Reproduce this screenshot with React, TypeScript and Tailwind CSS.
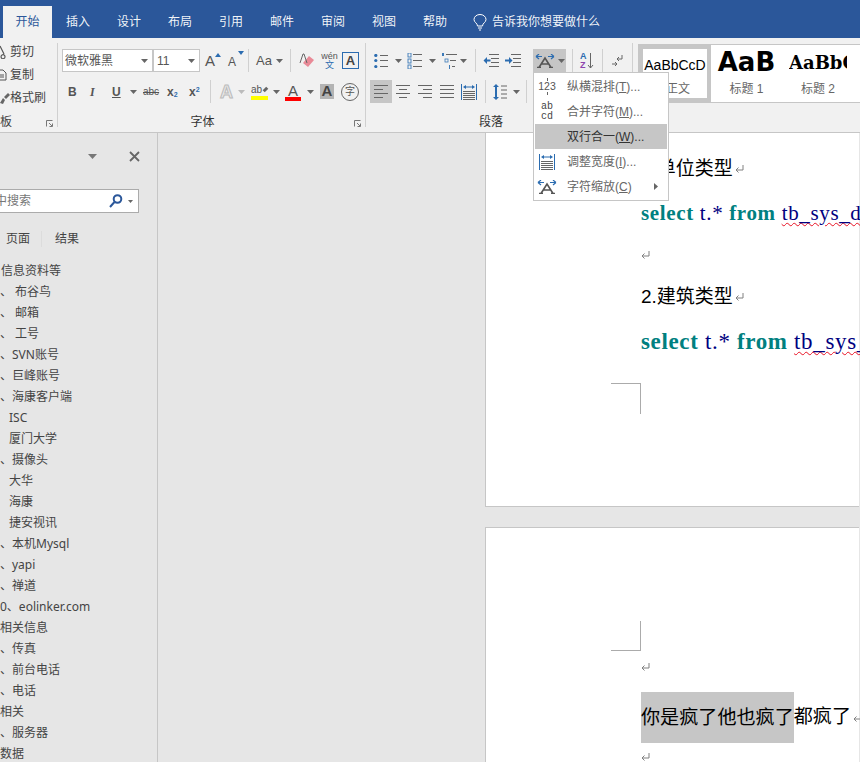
import React from "react";

const Caret = ({ className = "" }: { className?: string }) => (
	<svg width="7" height="4" viewBox="0 0 7 4" className={`shrink-0 ${className}`}>
		<path d="M0 0h7L3.5 4z" fill="#666" />
	</svg>
);

const Sep = ({ className = "" }: { className?: string }) => (
	<div className={`w-px h-[23px] bg-[#d0d0d0] shrink-0 ${className}`} />
);

const Launcher = () => (
	<svg width="7" height="7" viewBox="0 0 7 7" className="absolute right-[4px] bottom-0">
		<path d="M0.5 6.5V0.5H6.5M3 3l3 3M6.5 3.5v3h-3" fill="none" stroke="#777" strokeWidth="1" />
	</svg>
);

const ReturnMark = () => (
	<svg width="10" height="10" viewBox="0 0 10 10" className="shrink-0">
		<path d="M8 1v5H1.5M3.500 3.500L1 6l2.500 2.500" fill="none" stroke="#808080" strokeWidth="1" />
	</svg>
);

const Lines = ({ kind }: { kind: "left" | "center" | "right" | "full" }) => {
	const rows = {
		left: [[0, 14], [0, 9], [0, 14], [0, 9]],
		center: [[0, 14], [3, 8], [0, 14], [3, 8]],
		right: [[0, 14], [5, 9], [0, 14], [5, 9]],
		full: [[0, 14], [0, 14], [0, 14], [0, 14]],
	}[kind];
	return (
		<svg width="14" height="13" viewBox="0 0 14 13" className="shrink-0">
			{rows.map(([x, w], i) => (
				<rect key={i} x={x} y={i * 4} width={w} height="1" fill="#666" />
			))}
		</svg>
	);
};

const BulletIcon = () => (
	<svg width="14" height="14" viewBox="0 0 14 14" className="shrink-0">
		{[1, 6, 12].map((y) => (
			<g key={y}>
				<circle cx="1.8" cy={y + 0.5} r="1.6" fill="#2b6cb0" />
				<rect x="6" y={y} width="8" height="1" fill="#666" />
			</g>
		))}
	</svg>
);

const NumberIcon = () => (
	<svg width="15" height="16" viewBox="0 0 15 16" className="shrink-0">
		{[1, 7, 13].map((y) => (
			<g key={y}>
				<rect x="1" y={y - 1} width="3" height="4" fill="none" stroke="#3d7ab8" strokeWidth="0.9" />
				<rect x="6" y={y} width="9" height="1" fill="#666" />
			</g>
		))}
	</svg>
);

const MultiIcon = () => (
	<svg width="16" height="16" viewBox="0 0 16 16" className="shrink-0">
		<rect x="1" y="0" width="2" height="3" fill="#3d7ab8" />
		<rect x="5" y="1" width="11" height="1" fill="#666" />
		<rect x="4" y="6" width="3" height="3" fill="none" stroke="#3d7ab8" strokeWidth="0.8" />
		<rect x="9" y="7" width="6" height="1" fill="#666" />
		<rect x="8" y="12" width="1" height="4" fill="#3d7ab8" />
		<rect x="11" y="13" width="3" height="1" fill="#666" />
	</svg>
);

const IndentIcon = ({ flip = false }: { flip?: boolean }) => (
	<svg width="16" height="13" viewBox="0 0 16 13" className="shrink-0">
		<rect x="6" y="0" width="10" height="1" fill="#666" />
		<rect x="8" y="4" width="8" height="1" fill="#666" />
		<rect x="8" y="8" width="8" height="1" fill="#666" />
		<rect x="6" y="12" width="10" height="1" fill="#666" />
		{flip ? (
			<path d="M0 5.500h4V3l3.500 3.500L4 10V7.500H0z" fill="#2b6cb0" />
		) : (
			<path d="M7.500 5.500H4V3L0.500 6.500 4 10V7.500h3.500z" fill="#2b6cb0" />
		)}
	</svg>
);

const ScaleIcon = () => (
	<svg width="20" height="14" viewBox="0 0 20 14" className="shrink-0">
		<path d="M2 13.500h4M14 13.500h4M4 13.500L10 4l6 9.500M6.500 10h7" fill="none" stroke="#555" strokeWidth="1.600" />
		<path d="M1 3.500h6M1 3.500L4 1M1 3.500L4 6M19 3.500h-6M19 3.500L16 1M19 3.500L16 6" fill="none" stroke="#2b6cb0" strokeWidth="1.200" transform="translate(0 -1)" />
	</svg>
);

const WidthIcon = () => (
	<svg width="16" height="16" viewBox="0 0 16 16" className="shrink-0">
		<rect x="0" y="0" width="1" height="16" fill="#2b6cb0" />
		<rect x="15" y="0" width="1" height="16" fill="#2b6cb0" />
		<path d="M2 3l3-2v1.500h6V1l3 2-3 2V3.500H5V5z" fill="#2b6cb0" />
		{[7, 9, 11, 13, 15].map((y) => (
			<rect key={y} x="2" y={y} width="12" height="1" fill="#666" />
		))}
	</svg>
);

const MenuLabel = ({ text, hot, tail = "..." }: { text: string; hot: string; tail?: string }) => (
	<span>
		{text}(<span className="underline">{hot}</span>){tail}
	</span>
);

const menuRows = [
	{
		icon: (
			<span className="relative flex flex-col items-center text-[10.5px] leading-[11px] text-[#555]">
				<span className="w-px h-[3px] bg-[#666]" />
				<span>123</span>
				<span className="w-px h-[3px] bg-[#666]" />
			</span>
		),
		label: <MenuLabel text="纵横混排" hot="T" />,
	},
	{
		icon: (
			<span className="flex flex-col items-center text-[10px] leading-[10px] text-[#444] [font-family:'Liberation_Mono',monospace]">
				<span>ab</span>
				<span>cd</span>
			</span>
		),
		label: <MenuLabel text="合并字符" hot="M" />,
	},
	{ icon: null, label: <MenuLabel text="双行合一" hot="W" />, active: true },
	{ icon: <WidthIcon />, label: <MenuLabel text="调整宽度" hot="I" /> },
	{ icon: <ScaleIcon />, label: <MenuLabel text="字符缩放" hot="C" tail="" />, more: true },
];

const treeRows = [
	{ text: "信息资料等", pl: "pl-[1px]" },
	{ text: "、 布谷鸟", pl: "pl-0" },
	{ text: "、 邮箱", pl: "pl-0" },
	{ text: "、 工号", pl: "pl-0" },
	{ text: "、SVN账号", pl: "pl-0" },
	{ text: "、巨峰账号", pl: "pl-0" },
	{ text: "、海康客户端", pl: "pl-0" },
	{ text: "ISC", pl: "pl-[9px]" },
	{ text: "厦门大学", pl: "pl-[9px]" },
	{ text: "、摄像头", pl: "pl-0" },
	{ text: "大华", pl: "pl-[9px]" },
	{ text: "海康", pl: "pl-[9px]" },
	{ text: "捷安视讯", pl: "pl-[9px]" },
	{ text: "、本机Mysql", pl: "pl-0" },
	{ text: "、yapi", pl: "pl-0" },
	{ text: "、禅道", pl: "pl-0" },
	{ text: "0、eolinker.com", pl: "pl-0" },
	{ text: "相关信息", pl: "pl-0" },
	{ text: "、传真", pl: "pl-0" },
	{ text: "、前台电话", pl: "pl-0" },
	{ text: "、电话", pl: "pl-0" },
	{ text: "相关", pl: "pl-0" },
	{ text: "、服务器", pl: "pl-0" },
	{ text: "数据", pl: "pl-0" },
];

const tabs = ["插入", "设计", "布局", "引用", "邮件", "审阅", "视图", "帮助"];

function SqlLine({ size, tail }: { size: string; tail: string }) {
	return (
		<div className={`flex h-[36px] items-center whitespace-pre tracking-[0.65px] [font-family:'Liberation_Serif',serif] ${size}`}>
			<span className="font-bold text-[#008080]">select </span>
			<span className="text-[#000080]">t.* </span>
			<span className="font-bold text-[#008080]">from </span>
			<span className="text-[#000080] underline decoration-wavy decoration-[#e81123] decoration-1 underline-offset-2">{tail}</span>
		</div>
	);
}

export default function App() {
	return (
		<div className="relative w-[860px] h-[762px] overflow-hidden bg-[#e6e6e6] text-[12px] text-[#444] [font-family:'Liberation_Sans','Noto_Sans_CJK_SC',sans-serif]">
			{/* Title tabs */}
			<div className="flex h-[38px] bg-[#2b579a] pt-[6px] pl-[3px]">
				<div className="w-[49px] flex items-center justify-center bg-[#f1f1f1] text-[#2b579a]">开始</div>
				<div className="flex items-center text-white/95 ml-[14px]">
					{tabs.map((t) => (
						<span key={t} className="w-[24px] mr-[27px]">{t}</span>
					))}
					<svg width="14" height="17" viewBox="0 0 14 17" fill="none" stroke="#fff" strokeWidth="1" className="-ml-[1px]">
						<path d="M4.500 12c0-3-3.500-3.500-3.500-6.500a6 5 0 0 1 12 0c0 3-3.500 3.500-3.500 6.500zM5 14h4M6 16h2" />
					</svg>
					<span className="ml-[5px] text-white/95">告诉我你想要做什么</span>
				</div>
			</div>

			{/* Ribbon */}
			<div className="flex h-[95px] bg-[#f1f1f1] border-b border-[#c6c6c6] overflow-hidden">
				{/* Clipboard */}
				<div className="relative w-[58px] h-[84px] mt-[5px] border-r border-[#d0d0d0] shrink-0">
					<div className="flex flex-col gap-[5px]">
						<div className="flex items-center h-[18px]">
							<svg width="7" height="14" viewBox="0 0 7 14" fill="none" stroke="#555" strokeWidth="1.200"><path d="M0 1l4 8M5 12a2 2 0 1 1-3-2 2 2 0 0 1 3 2z" /></svg>
							<span className="ml-[3px]">剪切</span>
						</div>
						<div className="flex items-center h-[18px]">
							<svg width="7" height="12" viewBox="0 0 7 12" fill="none" stroke="#555"><path d="M-2 1h5l3 3v7h-8zM0 6h4M0 8h4" /></svg>
							<span className="ml-[3px]">复制</span>
						</div>
						<div className="flex items-center h-[18px]">
							<svg width="10" height="13" viewBox="0 0 10 13"><path d="M8 1l2 2-4 4-2-2zM3 6l2 2-2 4-3-1z" fill="#666" /></svg>
							<span>格式刷</span>
						</div>
					</div>
					<div className="absolute -bottom-[2px] left-0 h-[14px] leading-[14px]">板</div>
					<Launcher />
				</div>

				{/* Font */}
				<div className="relative w-[308px] h-[84px] mt-[5px] border-r border-[#d0d0d0] shrink-0">
					<div className="flex items-center h-[23px] mt-[6px] pl-[4px]">
						<div className="w-[91px] h-[23px] flex items-center justify-between bg-white border border-[#c6c6c6] pl-[2px] pr-[4px] text-[#555]">
							<span>微软雅黑</span>
							<Caret />
						</div>
						<div className="w-[47px] h-[23px] flex items-center justify-between bg-white border border-[#c6c6c6] pl-[3px] pr-[4px] text-[#555]">
							<span>11</span>
							<Caret />
						</div>
						<div className="relative ml-[5px] w-[16px] text-[15px] leading-none text-[#555]">
							A
							<svg width="6" height="4" viewBox="0 0 6 4" className="absolute right-0 top-0"><path d="M0 4h6L3 0z" fill="#2b6cb0" /></svg>
						</div>
						<div className="relative ml-[7px] w-[16px] text-[12px] leading-none text-[#555] pt-[2px]">
							A
							<svg width="6" height="4" viewBox="0 0 6 4" className="absolute right-0 top-[-3px]"><path d="M0 0h6L3 4z" fill="#2b6cb0" /></svg>
						</div>
						<Sep className="ml-[4px]" />
						<span className="ml-[7px] w-[17px] text-[13px] text-[#555]">Aa</span>
						<Caret className="ml-[3px]" />
						<Sep className="ml-[7px]" />
						<svg width="17" height="16" viewBox="0 0 17 16" className="ml-[8px] shrink-0">
							<path d="M10 3l5 4-6 7-5-4z" fill="#e98a97" />
							<path d="M1 10L4 1h1l3 9" fill="none" stroke="#666" />
						</svg>
						<div className="ml-[5px] w-[17px] flex flex-col items-center leading-none">
							<span className="text-[9px] text-[#555]">wén</span>
							<span className="text-[9px] text-[#2b6cb0]">文</span>
						</div>
						<div className="ml-[4px] w-[17px] h-[17px] flex items-center justify-center border border-[#2b6cb0] text-[13px] font-bold text-[#444]">A</div>
					</div>
					<div className="flex items-center h-[23px] mt-[8px]">
						<span className="ml-[10px] w-[9px] font-bold text-[#555]">B</span>
						<span className="ml-[13px] w-[9px] italic font-bold text-[#555] [font-family:'Liberation_Serif',serif]">I</span>
						<span className="ml-[13px] w-[10px] font-bold underline text-[#555]">U</span>
						<Caret className="ml-[8px]" />
						<span className="ml-[6px] w-[17px] text-[10px] line-through text-[#555]">abc</span>
						<span className="ml-[7px] w-[12px] font-bold text-[#555]">x<sub className="text-[7px] text-[#2b6cb0]">2</sub></span>
						<span className="ml-[10px] w-[13px] font-bold text-[#555]">x<sup className="text-[7px] text-[#2b6cb0]">2</sup></span>
						<Sep className="ml-[8px]" />
						<span className="ml-[9px] w-[16px] text-[18px] font-bold leading-none text-[#e8e8e8] [-webkit-text-stroke:1px_#bbb]">A</span>
						<svg width="7" height="4" viewBox="0 0 7 4" className="ml-[2px] shrink-0"><path d="M0 0h7L3.500 4z" fill="#bbb" /></svg>
						<div className="ml-[6px] w-[17px] flex flex-col leading-none">
							<div className="flex items-center h-[13px] text-[10px] text-[#555]">ab<span className="ml-[1px] w-[8px] h-[3px] -rotate-45 bg-[#666]" /></div>
							<div className="h-[4px] bg-[#ffff00]" />
						</div>
						<Caret className="ml-[5px]" />
						<div className="ml-[5px] w-[16px] flex flex-col items-center leading-none">
							<span className="text-[15px] h-[14px] text-[#555]">A</span>
							<div className="w-[16px] h-[4px] bg-[#ff0000]" />
						</div>
						<Caret className="ml-[6px]" />
						<div className="ml-[6px] w-[14px] h-[15px] flex items-center justify-center bg-[#b4b4b4] font-bold text-[15px] text-[#444]">A</div>
						<div className="ml-[7px] w-[18px] h-[18px] flex items-center justify-center rounded-full border border-[#666] text-[10px] text-[#555]">字</div>
					</div>
					<div className="absolute -bottom-[2px] inset-x-0 h-[14px] pr-[18px] leading-[14px] text-center text-[#333]">字体</div>
					<Launcher />
				</div>

				{/* Paragraph */}
				<div className="relative w-[267px] h-[84px] mt-[5px] border-r border-[#d0d0d0] shrink-0">
					<div className="flex items-center h-[23px] mt-[6px]">
						<div className="ml-[8px]"><BulletIcon /></div>
						<Caret className="ml-[7px]" />
						<div className="ml-[5px]"><NumberIcon /></div>
						<Caret className="ml-[7px]" />
						<div className="ml-[5px]"><MultiIcon /></div>
						<Caret className="ml-[3px]" />
						<Sep className="ml-[8px]" />
						<div className="ml-[7px]"><IndentIcon /></div>
						<div className="ml-[6px]"><IndentIcon flip /></div>
						<div className="ml-[12px] w-[33px] h-[23px] flex items-center gap-[3px] pl-[2px] bg-[#c6c6c6]">
							<ScaleIcon />
							<Caret />
						</div>
						<Sep className="ml-[6px]" />
						<div className="ml-[7px] w-[15px] flex items-center">
							<div className="flex flex-col text-[9px] leading-[9px] font-bold">
								<span className="text-[#2b6cb0]">A</span>
								<span className="text-[#8e44ad]">Z</span>
							</div>
							<svg width="7" height="16" viewBox="0 0 7 16" fill="none" stroke="#666"><path d="M3.500 0v15M1 12l2.500 3L6 12" /></svg>
						</div>
						<Sep className="ml-[7px]" />
						<svg width="11" height="12" viewBox="0 0 11 12" fill="none" stroke="#666" className="ml-[9px] shrink-0">
							<path d="M10 0v4H5M7 2L5 4l2 2M0 9h4M3 7l2 2-2 2" />
						</svg>
					</div>
					<div className="flex items-center h-[23px] mt-[8px]">
						<div className="ml-[4px] w-[22px] h-[23px] flex items-center justify-center bg-[#c6c6c6]"><Lines kind="left" /></div>
						<div className="ml-[4px]"><Lines kind="center" /></div>
						<div className="ml-[8px]"><Lines kind="right" /></div>
						<div className="ml-[8px]"><Lines kind="full" /></div>
						<div className="ml-[7px]"><WidthIcon /></div>
						<Sep className="ml-[8px]" />
						<svg width="14" height="16" viewBox="0 0 14 16" className="ml-[7px] shrink-0">
							<path d="M3 0l3 3H4v10h2l-3 3-3-3h2V3H0z" fill="#2b6cb0" />
							<path d="M8 2h6M8 6h6M8 10h6M8 14h6" stroke="#666" />
						</svg>
						<Caret className="ml-[6px]" />
						<Sep className="ml-[6px]" />
					</div>
					<div className="absolute -bottom-[2px] inset-x-0 h-[14px] pr-[16px] leading-[14px] text-center text-[#333]">段落</div>
					<Launcher />
				</div>

				{/* Styles */}
				<div className="flex h-[59px] w-[240px] ml-[5px] mt-[6px] bg-white border border-[#c6c6c6] shrink-0 overflow-hidden">
					<div className="w-[72px] h-[57px] border-4 border-[#c6c6c6] flex flex-col items-center shrink-0 text-black">
						<span className="mt-[6px] h-[20px] leading-[20px] text-[14px] whitespace-nowrap">AaBbCcD</span>
						<span className="mt-[5px] ml-[6px] text-[#666]">正文</span>
					</div>
					<div className="w-[71px] flex flex-col items-center shrink-0">
						<span className="h-[30px] leading-[34px] text-[26px] font-bold text-black whitespace-nowrap [font-family:'DejaVu_Sans',sans-serif]">AaB</span>
						<span className="mt-[5px] text-[#666]">标题 1</span>
					</div>
					<div className="w-[72px] flex flex-col items-center shrink-0">
						<div className="w-[58px] h-[30px] overflow-hidden whitespace-nowrap">
							<span className="leading-[36px] text-[18px] font-bold text-black [font-family:'DejaVu_Serif',serif]">AaBbC</span>
						</div>
						<span className="mt-[5px] text-[#666]">标题 2</span>
					</div>
				</div>
			</div>

			{/* Body */}
			<div className="flex h-[629px] overflow-hidden">
				{/* Navigation pane */}
				<div className="w-[158px] border-r border-[#c6c6c6] shrink-0">
					<div className="flex items-center h-[46px]">
						<svg width="9" height="5" viewBox="0 0 9 5" className="ml-[88px]"><path d="M0 0h9L4.500 5z" fill="#777" /></svg>
						<svg width="11" height="11" viewBox="0 0 11 11" className="ml-[32px]" stroke="#666" strokeWidth="1.800"><path d="M1 1l9 9M10 1l-9 9" /></svg>
					</div>
					<div className="flex items-center w-[139px] h-[24px] mt-[10px] bg-white border-y border-r border-[#ababab] overflow-hidden">
						<span className="-ml-[5px] text-[#777]">中搜索</span>
						<svg width="14" height="14" viewBox="0 0 14 14" fill="none" stroke="#2b579a" strokeWidth="2" className="ml-auto">
							<circle cx="8.500" cy="5" r="3.800" />
							<path d="M5.500 8L1 13" />
						</svg>
						<svg width="5" height="3" viewBox="0 0 5 3" className="ml-[5px] mr-[5px]"><path d="M0 0h5L2.500 3z" fill="#666" /></svg>
					</div>
					<div className="flex items-center h-[20px] mt-[16px] pl-[6px] text-[#444]">
						<span>页面</span>
						<span className="ml-[11px] w-px h-[16px] bg-[#dcdcdc]" />
						<span className="ml-[13px]">结果</span>
					</div>
					<div className="mt-[11px] [font-family:'Noto_Sans','Noto_Sans_CJK_SC',sans-serif]">
						{treeRows.map((row, i) => (
							<div key={i} className={`h-[21px] leading-[21px] whitespace-pre ${row.pl}`}>{row.text}</div>
						))}
					</div>
				</div>

				{/* Document */}
				<div className="flex-1 min-w-0 pl-[327px] overflow-hidden text-black">
					<div className="w-[374px] h-[374px] bg-white border-l border-b border-[#c6c6c6] pl-[155px] pt-[18px]">
						<div className="flex h-[36px] items-center whitespace-nowrap text-[19px]">1.单位类型<span className="ml-[2px]"><ReturnMark /></span></div>
						<div className="mt-[9px]"><SqlLine size="text-[21px]" tail="tb_sys_dic" /></div>
						<div className="mt-[13px] h-[20px] flex items-center"><ReturnMark /></div>
						<div className="mt-[14px] flex h-[36px] items-center whitespace-nowrap text-[19px]">2.建筑类型<span className="ml-[2px]"><ReturnMark /></span></div>
						<div className="mt-[9px]"><SqlLine size="text-[23px]" tail="tb_sys_dic" /></div>
						<div className="-ml-[30px] mt-[23px] w-[30px] h-[31px] border-t border-r border-[#ababab]" />
					</div>
					<div className="w-[374px] h-[300px] mt-[20px] bg-white border-l border-t border-[#c6c6c6] pl-[155px]">
						<div className="-ml-[30px] mt-[93px] w-[30px] h-[30px] border-b border-r border-[#ababab]" />
						<div className="mt-[6px] h-[20px] flex items-center"><ReturnMark /></div>
						<div className="mt-[15px] flex items-center whitespace-nowrap text-[19.1px] h-[51px]">
							<span className="h-[51px] leading-[51px] bg-[#c6c6c6]">你是疯了他也疯了</span>
							<span>都疯了</span>
							<span className="ml-[2px]"><ReturnMark /></span>
						</div>
						<div className="mt-[4px] h-[20px] flex items-center"><ReturnMark /></div>
					</div>
				</div>
			</div>

			{/* Dropdown menu */}
			<div className="absolute left-[533px] top-[72px] w-[136px] h-[129px] bg-white border border-[#c6c6c6] p-px">
				{menuRows.map((row, i) => (
					<div key={i} className={`flex items-center h-[25px] ${row.active ? "bg-[#c6c6c6]" : ""}`}>
						<div className="w-[24px] mr-[8px] flex justify-center items-center shrink-0">{row.icon}</div>
						<span className={row.active ? "text-[#333]" : "text-[#666]"}>{row.label}</span>
						{row.more && (
							<svg width="4" height="7" viewBox="0 0 4 7" className="ml-auto mr-[9px]"><path d="M0 0l4 3.500L0 7z" fill="#666" /></svg>
						)}
					</div>
				))}
			</div>
		</div>
	);
}
